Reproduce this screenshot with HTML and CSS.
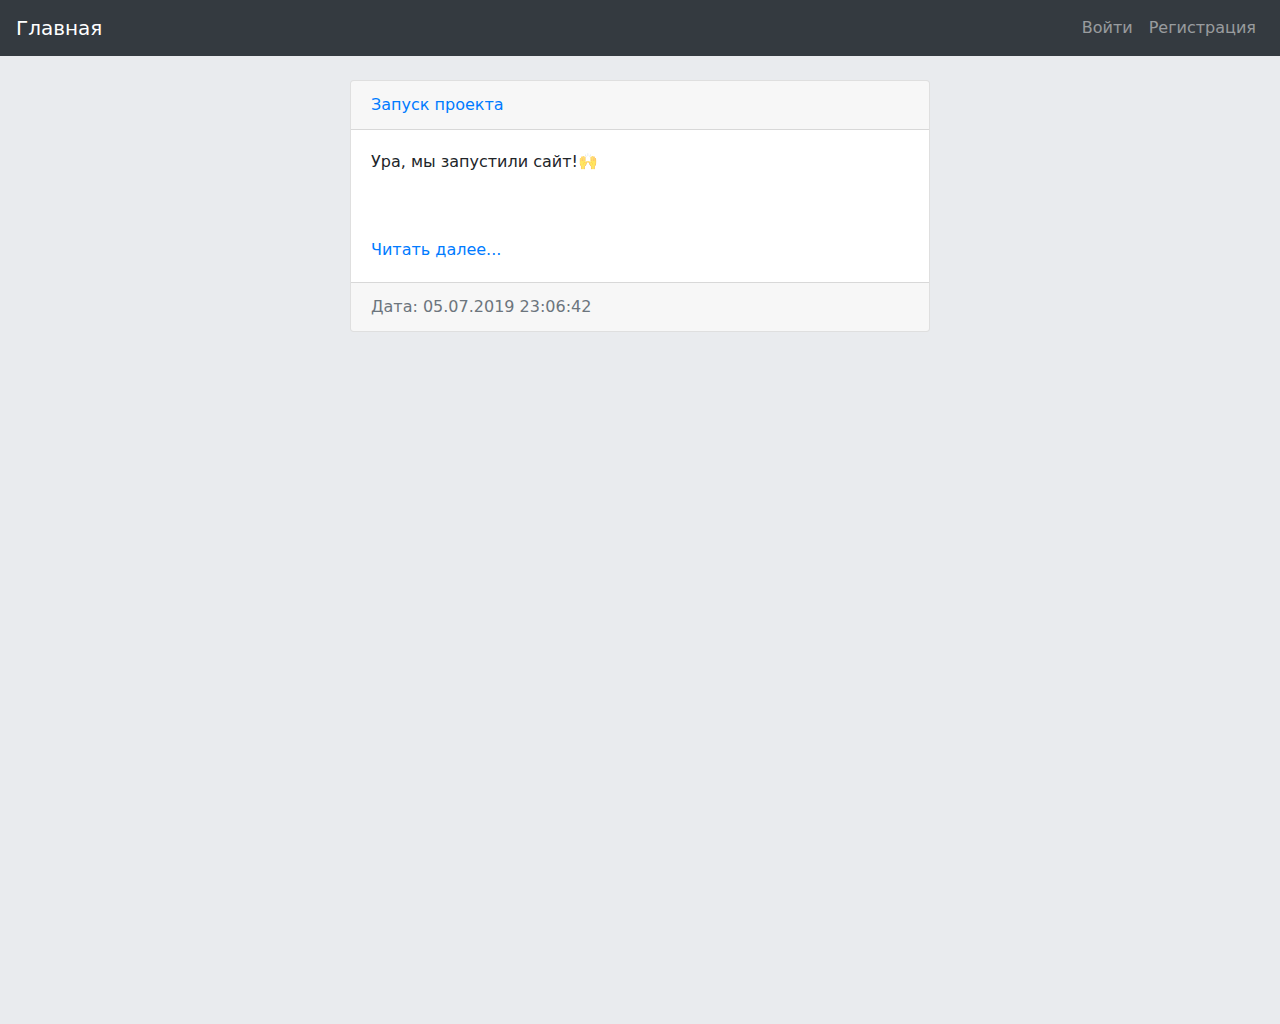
FILE: index.html
```html
<!DOCTYPE html>
<html lang="ru">
  <head>
    <meta charset="utf-8" />
    <title>Главная</title>
    <meta name="viewport" content="width=device-width, initial-scale=1.0" />
    <link rel="stylesheet" href="styles.css">
  </head>
  <body>
    <nav class="navbar">
      <a class="navbar-brand" href="#">Главная</a>
      <div class="navbar-nav">
        <a class="nav-link" href="#">Войти</a>
        <a class="nav-link" href="#">Регистрация</a>
      </div>
    </nav>

    <main class="posts">
      <article class="card">
        <div class="card-header">
          <a href="#">Запуск проекта</a>
        </div>
        <div class="card-body">
          <div class="card-text">
            <p>Ура, мы запустили сайт!<span class="emoji">🙌</span></p>
            <p>&nbsp;</p>
          </div>
          <a href="#">Читать далее...</a>
        </div>
        <div class="card-footer">Дата: 05.07.2019 23:06:42</div>
      </article>
    </main>
  </body>
</html>
```

FILE: styles.css
```css
* {
  box-sizing: border-box;
}

body {
  margin: 0;
  background: #e9ebee;
  color: #212529;
  font-family: "DejaVu Sans", "Noto Color Emoji", sans-serif;
  font-size: 16px;
  line-height: 24px;
}

a {
  color: #007bff;
  text-decoration: none;
}

a:hover {
  color: #0056b3;
  text-decoration: underline;
}

/* Top bar */
.navbar {
  display: flex;
  flex-wrap: wrap;
  align-items: center;
  justify-content: space-between;
  padding: 8px 16px;
  background: #343a40;
}

.navbar-brand {
  color: white;
  font-size: 20px;
}

.navbar-nav {
  display: flex;
}

.nav-link {
  padding: 8px;
  color: rgba(255, 255, 255, 0.5);
}

.navbar a:hover {
  color: white;
  text-decoration: none;
}

/* Posts */
.posts {
  max-width: 580px;
  margin: 24px auto;
}

.card {
  background: white;
  border: 1px solid rgba(0, 0, 0, 0.125);
  border-radius: 4px;
  overflow: hidden;
  word-wrap: break-word;
}

.card-header,
.card-footer {
  padding: 12px 20px;
  background: rgba(0, 0, 0, 0.03);
}

.card-header {
  border-bottom: 1px solid rgba(0, 0, 0, 0.125);
}

.card-footer {
  border-top: 1px solid rgba(0, 0, 0, 0.125);
  color: #6c757d;
}

.card-body {
  padding: 20px;
}

.card-text {
  margin-bottom: 24px;
}

.card-text p {
  margin: 0 0 16px;
}

.card-text p:last-child {
  margin-bottom: 0;
}

.emoji {
  filter: brightness(1.1) opacity(0.75);
}
```
